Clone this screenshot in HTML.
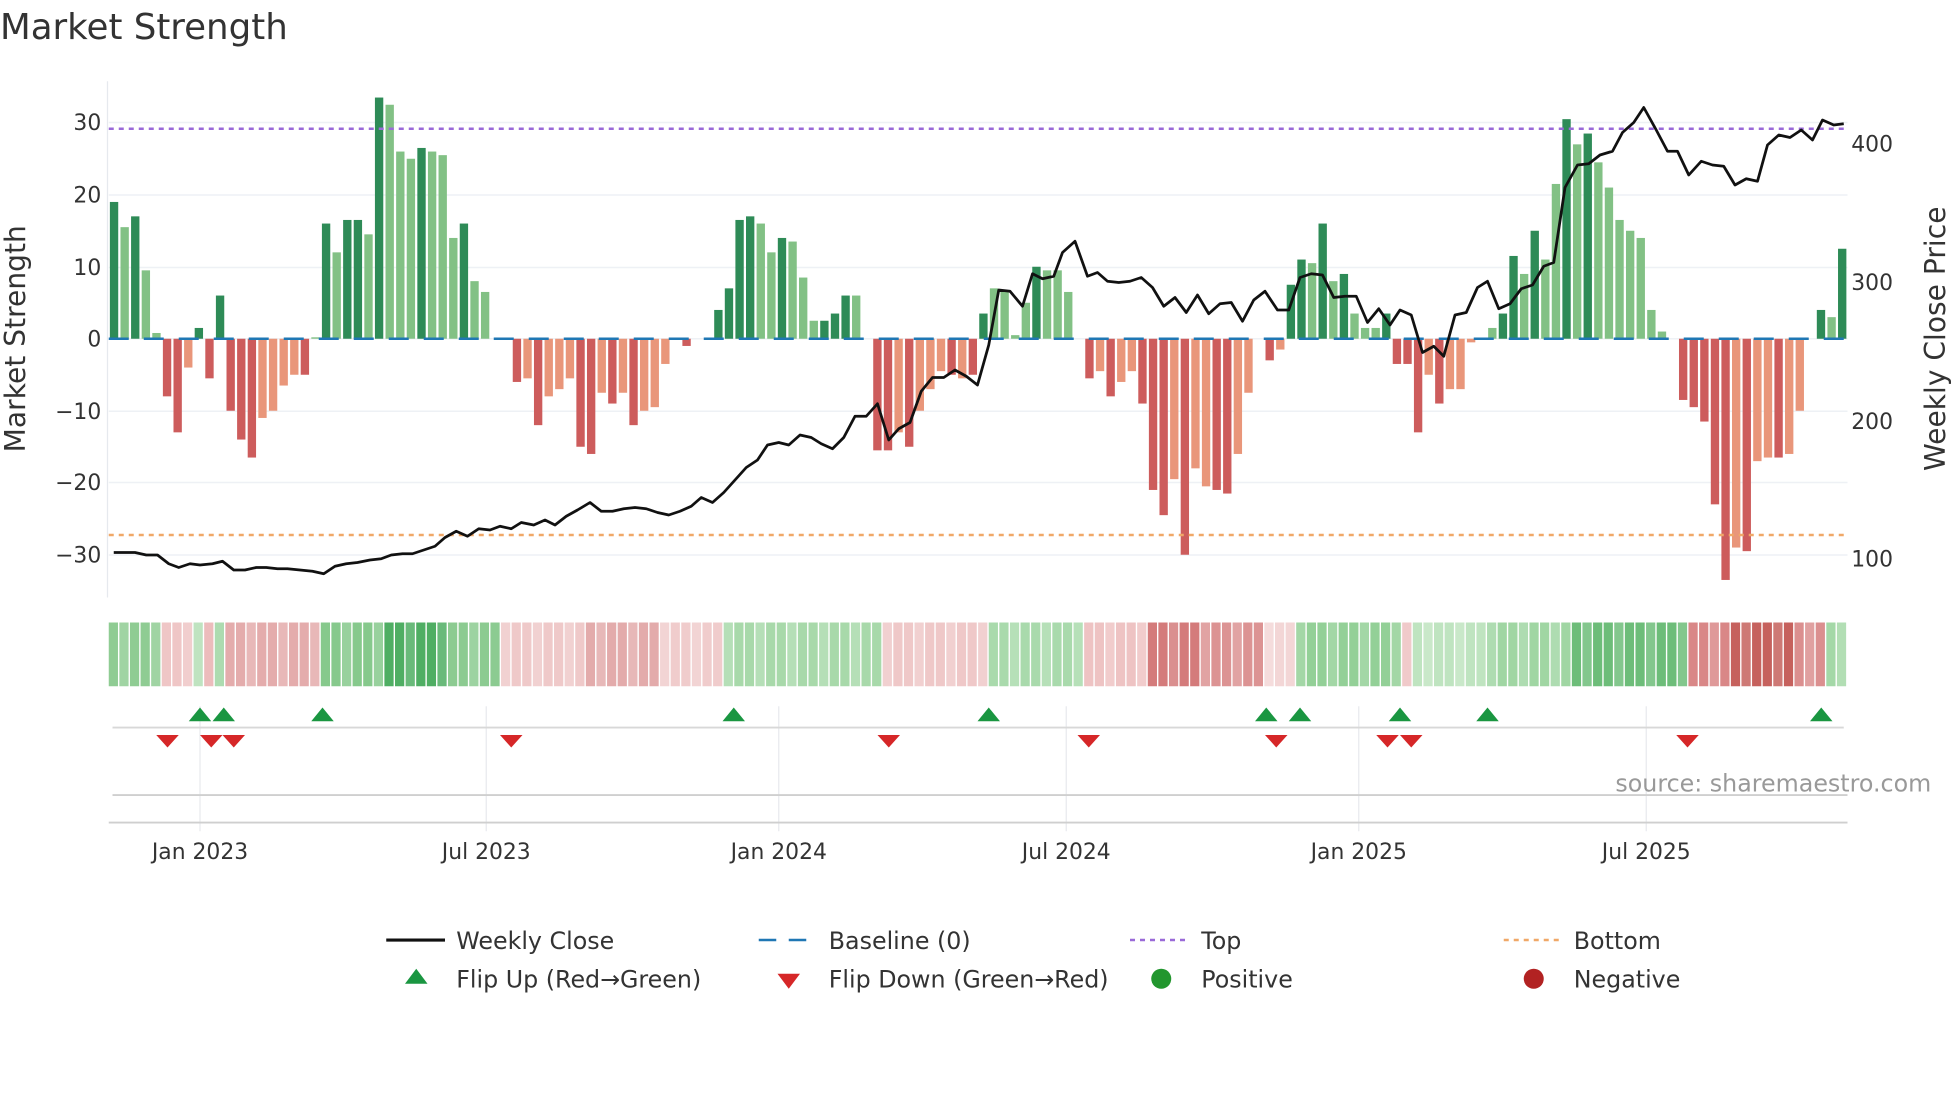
<!DOCTYPE html>
<html><head><meta charset="utf-8">
<style>
html,body{margin:0;padding:0;background:#fff;}
svg{display:block;font-family:"DejaVu Sans","Liberation Sans",sans-serif;}
</style></head>
<body>
<svg id="s" xmlns="http://www.w3.org/2000/svg" width="1960" height="1102" viewBox="0 0 1568 881.6" preserveAspectRatio="none">
<rect width="1568" height="881.6" fill="#fff"/>
<text x="0" y="31" font-size="28.5" fill="#333">Market Strength</text>
<g id="grid"></g>
<line x1="86" y1="65" x2="86" y2="478" stroke="#e6e9ee" stroke-width="1"/>
<g font-size="17.5" fill="#333" text-anchor="end">
<text x="81" y="104">30</text><text x="81" y="162">20</text><text x="81" y="220">10</text><text x="81" y="277">0</text>
<text x="81" y="335">−10</text><text x="81" y="392">−20</text><text x="81" y="450">−30</text>
</g>
<g font-size="17.5" fill="#333">
<text x="1481" y="121">400</text><text x="1481" y="232">300</text><text x="1481" y="343">200</text><text x="1481" y="453">100</text>
</g>
<text transform="translate(20,271) rotate(-90)" font-size="22.5" fill="#333" text-anchor="middle">Market Strength</text>
<text transform="translate(1556,271) rotate(-90)" font-size="22.5" fill="#333" text-anchor="middle">Weekly Close Price</text>
<g id="bars"></g>
<line x1="87" y1="271" x2="1478" y2="271" stroke="#1f77b4" stroke-width="2" stroke-dasharray="16,12"/>
<line x1="87" y1="103" x2="1478" y2="103" stroke="#9a6ad8" stroke-width="2" stroke-dasharray="4,4"/>
<line x1="87" y1="428" x2="1478" y2="428" stroke="#f0a868" stroke-width="2" stroke-dasharray="4,4"/>
<polyline id="price" fill="none" stroke="#111" stroke-width="2.2" stroke-linejoin="round"/>
<g id="heat"></g>
<g id="vgrid"></g>
<line x1="90" y1="582" x2="1475" y2="582" stroke="#d8d8d8" stroke-width="1.5"/>
<line x1="90" y1="636" x2="1478" y2="636" stroke="#cfcfcf" stroke-width="1.5"/>
<line x1="87" y1="658" x2="1478" y2="658" stroke="#cfcfcf" stroke-width="1.5"/>
<g id="marks"></g>
<text x="1545" y="633" font-size="19" fill="#999" text-anchor="end">source: sharemaestro.com</text>
<g font-size="17.5" fill="#333" text-anchor="middle">
<text x="160" y="687">Jan 2023</text><text x="389" y="687">Jul 2023</text><text x="623" y="687">Jan 2024</text>
<text x="853" y="687">Jul 2024</text><text x="1087" y="687">Jan 2025</text><text x="1317" y="687">Jul 2025</text>
</g>
<g font-size="19" fill="#333">
<line x1="309" y1="752" x2="356" y2="752" stroke="#111" stroke-width="2.5"/>
<text x="365" y="759">Weekly Close</text>
<line x1="607" y1="752" x2="652" y2="752" stroke="#1f77b4" stroke-width="2" stroke-dasharray="14,10"/>
<text x="663" y="759">Baseline (0)</text>
<line x1="904" y1="752" x2="948" y2="752" stroke="#9a6ad8" stroke-width="2" stroke-dasharray="4,4"/>
<text x="961" y="759">Top</text>
<line x1="1203" y1="752" x2="1247" y2="752" stroke="#f0a868" stroke-width="2" stroke-dasharray="4,4"/>
<text x="1259" y="759">Bottom</text>
<polygon points="324,787 342,787 333,775" fill="#1a9641"/>
<text x="365" y="790">Flip Up (Red→Green)</text>
<polygon points="622,779 640,779 631,791" fill="#d62728"/>
<text x="663" y="790">Flip Down (Green→Red)</text>
<circle cx="929" cy="783" r="8" fill="#22962e"/>
<text x="961" y="790">Positive</text>
<circle cx="1227" cy="783" r="8" fill="#b22222"/>
<text x="1259" y="790">Negative</text>
</g>
</svg>
<script>
var NS="http://www.w3.org/2000/svg";
function el(t,a,p){var e=document.createElementNS(NS,t);for(var k in a)e.setAttribute(k,a[k]);document.getElementById(p).appendChild(e);return e;}
[98,156,214,271,329,386,444].forEach(function(y){el("line",{x1:87,x2:1478,y1:y,y2:y,stroke:"#eef1f5","stroke-width":1.2},"grid");});
[160,389,623,853,1087,1317].forEach(function(x){el("line",{x1:x,x2:x,y1:565,y2:665,stroke:"#e8eaee","stroke-width":1},"vgrid");});
var B=[[19,'D'],[15.5,'L'],[17,'D'],[9.5,'L'],[0.8,'L'],[-8,'R'],[-13,'R'],[-4,'S'],[1.5,'D'],[-5.5,'R'],[6,'D'],[-10,'R'],[-14,'R'],[-16.5,'R'],[-11,'S'],[-10,'S'],[-6.5,'S'],[-5,'S'],[-5,'R'],[0.2,'L'],
[16,'D'],[12,'L'],[16.5,'D'],[16.5,'D'],[14.5,'L'],[33.5,'D'],[32.5,'L'],[26,'L'],[25,'L'],[26.5,'D'],[26,'L'],[25.5,'L'],[14,'L'],[16,'D'],[8,'L'],[6.5,'L'],[0,'L'],[0,'L'],
[-6,'R'],[-5.5,'S'],[-12,'R'],[-8,'S'],[-7,'S'],[-5.5,'S'],[-15,'R'],[-16,'R'],[-7.5,'S'],[-9,'R'],[-7.5,'S'],[-12,'R'],[-10,'S'],[-9.5,'S'],[-3.5,'S'],[0,'S'],[-1,'R'],[0,'S'],[0,'S'],
[4,'D'],[7,'D'],[16.5,'D'],[17,'D'],[16,'L'],[12,'L'],[14,'D'],[13.5,'L'],[8.5,'L'],[2.5,'L'],[2.5,'D'],[3.5,'D'],[6,'D'],[6,'L'],[0,'L'],
[-15.5,'R'],[-15.5,'R'],[-13,'S'],[-15,'R'],[-10,'S'],[-7,'S'],[-4.5,'S'],[-5,'R'],[-5.5,'S'],[-5,'R'],
[3.5,'D'],[7,'L'],[6.5,'L'],[0.5,'L'],[5,'L'],[10,'D'],[9.5,'L'],[9.5,'L'],[6.5,'L'],[0,'L'],
[-5.5,'R'],[-4.5,'S'],[-8,'R'],[-6,'S'],[-4.5,'S'],[-9,'R'],[-21,'R'],[-24.5,'R'],[-19.5,'S'],[-30,'R'],[-18,'S'],[-20.5,'S'],[-21,'R'],[-21.5,'R'],[-16,'S'],[-7.5,'S'],[0,'S'],[-3,'R'],[-1.5,'S'],
[7.5,'D'],[11,'D'],[10.5,'L'],[16,'D'],[8,'L'],[9,'D'],[3.5,'L'],[1.5,'L'],[1.5,'L'],[3.5,'D'],
[-3.5,'R'],[-3.5,'R'],[-13,'R'],[-5,'S'],[-9,'R'],[-7,'S'],[-7,'S'],[-0.5,'S'],[0,'L'],
[1.5,'L'],[3.5,'D'],[11.5,'D'],[9,'L'],[15,'D'],[11,'L'],[21.5,'L'],[30.5,'D'],[27,'L'],[28.5,'D'],[24.5,'L'],[21,'L'],[16.5,'L'],[15,'L'],[14,'L'],[4,'L'],[1,'L'],[0,'L'],
[-8.5,'R'],[-9.5,'R'],[-11.5,'R'],[-23,'R'],[-33.5,'R'],[-29,'S'],[-29.5,'R'],[-17,'S'],[-16.5,'S'],[-16.5,'R'],[-16,'S'],[-10,'S'],[0,'S'],
[4,'D'],[3,'L'],[12.5,'D']];
var C={D:'#2e8b57',L:'#82c185',R:'#cd5c5c',S:'#e9967a'};
var n=B.length, x0=87, w=(1478-87)/n;
B.forEach(function(b,i){var v=b[0];var h=Math.abs(v)*5.76;var y=v>=0?271-h:271;if(h<0.5)return;
el("rect",{x:(x0+i*w+0.9).toFixed(2),y:y.toFixed(2),width:(w-1.8).toFixed(2),height:h.toFixed(2),fill:C[b[1]]},"bars");});
var H=[[0,4,'#8fcc93'],[5,7,'#efc6c6'],[8,8,'#bfe3c0'],[9,9,'#ecbcbc'],[10,10,'#9fd5a2'],[11,19,'#e4acac'],[20,25,'#86c98c'],[26,31,'#4fae63'],[32,36,'#8ccb91'],[37,44,'#efc9c9'],[45,51,'#e3abab'],[52,57,'#f0cccc'],[58,72,'#a8d9aa'],[73,82,'#efc8c8'],[83,91,'#a9daac'],[92,97,'#eec3c3'],[98,102,'#d47b7b'],[103,108,'#dc9393'],[109,111,'#f3d6d6'],[112,121,'#93d097'],[122,122,'#f0caca'],[123,129,'#bfe4c0'],[130,137,'#a0d6a3'],[138,148,'#6dbd79'],[149,152,'#d98787'],[153,158,'#c6615d'],[159,161,'#db8f8f'],[162,163,'#a4d8a7']];
H.forEach(function(s){for(var i=s[0];i<=s[1]&&i<n;i++){var alt=(i%3==1)?0.85:1;
el("rect",{x:(x0+i*w).toFixed(2),y:498,width:(w-1.1).toFixed(2),height:51,fill:s[2],"fill-opacity":alt},"heat");}});
[160,179,258,587,791,1013,1040,1120,1190,1457].forEach(function(x){el("polygon",{points:(x-9)+",577 "+(x+9)+",577 "+x+",566",fill:"#1a9641"},"marks");});
[134,169,187,409,711,871,1021,1110,1129,1350].forEach(function(x){el("polygon",{points:(x-9)+",588 "+(x+9)+",588 "+x+",598",fill:"#d62728"},"marks");});
var P=[91,442,108,442,117,444,126,444,135,451,143,454,152,451,160,452,170,451,178,449,187,456,196,456,205,454,213,454,222,455,230,455,240,456,250,457,259,459,268,453,277,451,286,450,296,448,305,447,313,444,322,443,330,443,339,440,348,437,356,430,365,425,374,429,383,423,392,424,400,421,409,423,417,418,427,420,436,416,444,420,453,413,462,408,472,402,481,409,490,409,499,407,508,406,517,407,526,410,535,412,544,409,553,405,561,398,570,402,579,394,588,384,597,374,606,368,614,356,623,354,631,356,640,348,649,350,657,355,666,359,675,350,684,333,693,333,702,323,711,352,719,343,728,338,737,313,746,302,755,302,764,296,773,301,782,308,791,276,799,232,808,233,818,245,826,219,834,223,843,221,850,202,860,193,870,221,878,218,886,225,895,226,904,225,913,222,922,230,931,245,940,238,949,250,958,236,967,251,976,243,985,242,994,257,1003,240,1012,233,1022,248,1031,248,1040,222,1049,219,1058,220,1067,238,1076,237,1085,237,1094,258,1103,247,1112,260,1120,248,1129,252,1138,282,1147,277,1155,285,1164,252,1173,250,1182,230,1190,225,1199,247,1208,243,1217,231,1226,228,1235,213,1243,210,1252,150,1262,132,1271,131,1280,124,1290,121,1298,106,1307,98,1315,86,1325,104,1334,121,1342,121,1351,140,1361,129,1370,132,1379,133,1388,148,1397,143,1406,145,1414,116,1423,108,1432,110,1441,104,1450,112,1458,96,1467,100,1475,99];
var pts=[];for(var i=0;i<P.length;i+=2)pts.push(P[i]+","+P[i+1]);
document.getElementById("price").setAttribute("points",pts.join(" "));
</script>
</body></html>
